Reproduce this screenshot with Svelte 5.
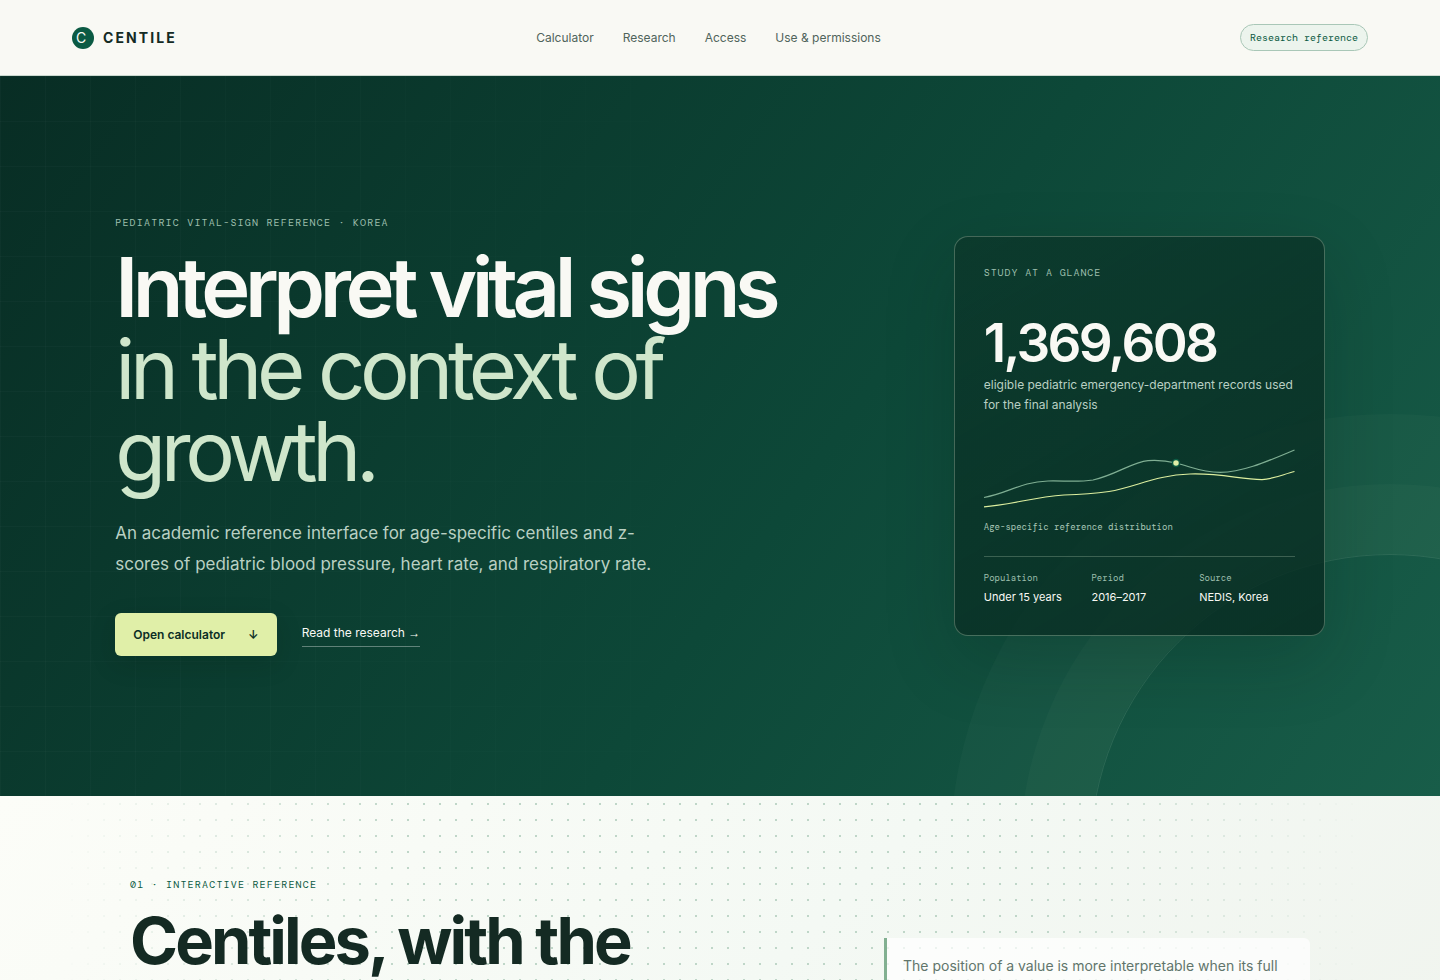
<script lang="ts">
  const links = [
    { label: "Calculator", href: "#calculator" },
    { label: "Research", href: "#research" },
    { label: "Access", href: "#access" },
    { label: "Use & permissions", href: "#permissions" },
  ];

  const facts = [
    { term: "Population", value: "Under 15 years" },
    { term: "Period", value: "2016–2017" },
    { term: "Source", value: "NEDIS, Korea" },
  ];
</script>

<header class="site-header">
  <a class="brand" href="#top">
    <span class="brand-mark" aria-hidden="true">C</span>
    <span>CENTILE</span>
  </a>
  <nav class="site-nav" aria-label="Main">
    {#each links as link}
      <a href={link.href}>{link.label}</a>
    {/each}
  </nav>
  <span class="status">Research reference</span>
</header>

<main id="top">
  <section class="hero">
    <div class="hero-inner">
      <div class="hero-copy">
        <p class="eyebrow">Pediatric vital-sign reference · Korea</p>
        <h1>Interpret vital signs <span>in the context of growth.</span></h1>
        <p class="lead">
          An academic reference interface for age-specific centiles and z-scores of pediatric blood
          pressure, heart rate, and respiratory rate.
        </p>
        <div class="actions">
          <a class="primary" href="#calculator">Open calculator <span aria-hidden="true">↓</span></a>
          <a class="secondary" href="#research">Read the research <span aria-hidden="true">→</span></a>
        </div>
      </div>

      <aside class="glance">
        <p class="eyebrow">Study at a glance</p>
        <strong class="total">1,369,608</strong>
        <p class="total-note">eligible pediatric emergency-department records used for the final analysis</p>
        <svg class="chart" viewBox="0 0 311 80" aria-hidden="true">
          <path
            class="line-upper"
            d="M0 61.5C25 57 36 46 64 45C80 44.5 92 46.5 109 44C132 39 148 26 164 24.6C173 24 182 24.5 192 27C208 31 218 36.4 236 36.4C260 36 284 25 310.5 14"
          />
          <path
            class="line-lower"
            d="M0 70.8C26 69 50 61 80 59C100 58.5 108 58 125 55.5C152 51 172 39 206 38C238 37 256 43.5 278 43.6C290 43 300 38 310.5 35.5"
          />
          <circle cx="192" cy="27" r="3.5" />
        </svg>
        <p class="caption">Age-specific reference distribution</p>
        <dl>
          {#each facts as fact}
            <div>
              <dt>{fact.term}</dt>
              <dd>{fact.value}</dd>
            </div>
          {/each}
        </dl>
      </aside>
    </div>
  </section>

  <section class="reference" id="calculator">
    <div class="reference-head">
      <div>
        <p class="eyebrow">01 · Interactive reference</p>
        <h2>Centiles, with the</h2>
      </div>
      <p class="note">The position of a value is more interpretable when its full</p>
    </div>
  </section>
</main>

<style>
  :global(body) {
    margin: 0;
    background: #f9f9f4;
    color: #142a23;
    font-family: Inter, "Liberation Sans", sans-serif;
  }

  a {
    color: inherit;
    text-decoration: none;
  }

  p,
  h1,
  h2,
  dl,
  dd {
    margin: 0;
  }

  .site-header {
    display: flex;
    align-items: center;
    justify-content: space-between;
    box-sizing: border-box;
    height: 76px;
    padding: 0 5%;
    border-bottom: 1px solid #cbd9cf;
    background: #f9f9f4;
  }

  .brand {
    display: flex;
    align-items: center;
    gap: 9px;
    font-size: 14px;
    font-weight: 700;
    letter-spacing: 0.15em;
  }

  .brand-mark {
    box-sizing: border-box;
    width: 22px;
    height: 22px;
    padding-left: 4px;
    border-radius: 50%;
    background: #0b5a43;
    color: #f9f9f4;
    font-weight: 400;
    line-height: 22px;
    letter-spacing: 0;
  }

  .site-nav {
    display: flex;
    gap: 29px;
    color: #50645b;
    font-size: 12px;
  }

  .status {
    padding: 6px 9px;
    border: 1px solid #a9c7b7;
    border-radius: 20px;
    background: #ecf4ed;
    color: #0b5a43;
    font: 10px/13px "DM Mono", "Liberation Mono", monospace;
  }

  .eyebrow {
    font: 10px/14px "DM Mono", "Liberation Mono", monospace;
    letter-spacing: 0.12em;
    text-transform: uppercase;
  }

  .hero {
    position: relative;
    display: grid;
    align-items: center;
    min-height: 720px;
    overflow: hidden;
    background: linear-gradient(125deg, #082d24 0%, #0d4838 56%, #185d49 100%);
    color: #f9f9f4;
  }

  .hero::before {
    position: absolute;
    inset: 0;
    background-image:
      linear-gradient(rgba(255, 255, 255, 0.025) 1px, transparent 1px),
      linear-gradient(90deg, rgba(255, 255, 255, 0.025) 1px, transparent 1px);
    background-size: 45px 45px;
    mask-image: linear-gradient(90deg, #000, transparent 60%);
    content: "";
  }

  .hero::after {
    position: absolute;
    top: 478px;
    right: -250px;
    box-sizing: border-box;
    width: 600px;
    height: 600px;
    border: 1px solid rgba(207, 230, 203, 0.13);
    border-radius: 50%;
    box-shadow:
      0 0 0 70px rgba(207, 230, 203, 0.03),
      0 0 0 140px rgba(207, 230, 203, 0.03);
    content: "";
  }

  .hero-inner {
    position: relative;
    z-index: 1;
    display: grid;
    grid-template-columns: minmax(0, 1fr) 371px;
    align-items: center;
    gap: 110px;
    width: 84%;
    max-width: 1210px;
    margin: 0 auto;
  }

  .hero-copy .eyebrow {
    color: #9dbfad;
  }

  h1 {
    margin-top: 16px;
    font-size: 83px;
    font-weight: 600;
    line-height: 82px;
    letter-spacing: -0.065em;
  }

  h1 span {
    display: block;
    color: #cfe6cb;
    font-weight: 400;
  }

  .lead {
    max-width: 560px;
    margin-top: 26px;
    color: #b9d0c3;
    font-size: 17px;
    line-height: 31px;
  }

  .actions {
    display: flex;
    align-items: center;
    gap: 25px;
    margin-top: 33px;
    font-size: 12px;
  }

  .primary {
    display: flex;
    gap: 23px;
    padding: 14px 18px;
    border-radius: 6px;
    background: #e0efa8;
    box-shadow: 0 8px 24px rgba(2, 25, 18, 0.18);
    color: #0b2e25;
    font-weight: 600;
    line-height: 15px;
  }

  .secondary {
    padding-bottom: 3px;
    border-bottom: 1px solid rgba(255, 255, 255, 0.35);
    line-height: 20px;
  }

  .secondary span {
    font-family: "Liberation Sans", sans-serif;
  }

  .glance {
    padding: 29px;
    border: 1px solid rgba(207, 230, 203, 0.3);
    border-radius: 14px;
    background: linear-gradient(150deg, rgba(11, 52, 40, 0.68), rgba(8, 44, 34, 0.85));
    box-shadow: 0 24px 70px rgba(2, 25, 18, 0.2);
  }

  .glance .eyebrow {
    color: #9dbfad;
    letter-spacing: 0.09em;
  }

  .total {
    display: block;
    margin-top: 36px;
    font-size: 53px;
    font-weight: 600;
    line-height: 54px;
    letter-spacing: -0.05em;
  }

  .total-note {
    margin-top: 5px;
    color: #b9d0c3;
    font-size: 12px;
    line-height: 20px;
  }

  .chart {
    display: block;
    width: 100%;
    margin-top: 21px;
    overflow: visible;
  }

  .chart path {
    fill: none;
    stroke-width: 1.2;
  }

  .chart .line-upper {
    stroke: #7fae93;
  }

  .chart .line-lower {
    stroke: #dcee9f;
  }

  .chart circle {
    fill: #e0efa8;
    stroke: #0b5a43;
    stroke-width: 1.5;
  }

  .caption {
    margin-top: 4px;
    color: #a9c7b7;
    font: 9px/14px "DM Mono", "Liberation Mono", monospace;
  }

  dl {
    display: grid;
    grid-template-columns: repeat(3, 1fr);
    gap: 12px;
    margin-top: 22px;
    padding-top: 15px;
    border-top: 1px solid rgba(207, 230, 203, 0.25);
  }

  dt {
    color: #9dbfad;
    font: 9px/12px "DM Mono", "Liberation Mono", monospace;
  }

  dd {
    margin-top: 5px;
    font-size: 11px;
    line-height: 17px;
  }

  .reference {
    position: relative;
    padding: 82px 0 80px;
    background: linear-gradient(135deg, #fcfdf8 0%, #f4f9f4 55%, #f0f4ee 100%);
  }

  .reference::before {
    position: absolute;
    inset: 0;
    background-image: radial-gradient(circle, #bfd6c8 1px, transparent 1px);
    background-size: 16px 16px;
    mask-image: linear-gradient(90deg, transparent 4%, #000 28%, #000 72%, transparent 95%);
    content: "";
  }

  .reference-head {
    position: relative;
    display: grid;
    grid-template-columns: minmax(0, 1fr) 426px;
    align-items: start;
    gap: 80px;
    width: 84%;
    max-width: 1180px;
    margin: 0 auto;
  }

  .reference .eyebrow {
    color: #0b5a43;
  }

  h2 {
    margin-top: 16px;
    font-size: 65px;
    font-weight: 700;
    line-height: 65px;
    letter-spacing: -0.045em;
  }

  .note {
    box-sizing: border-box;
    margin-top: 60px;
    padding: 16px;
    border-left: 3px solid #82b091;
    border-radius: 0 6px 6px 0;
    background: rgba(255, 255, 255, 0.7);
    color: #61756b;
    font-size: 14px;
    line-height: 23px;
  }
</style>
